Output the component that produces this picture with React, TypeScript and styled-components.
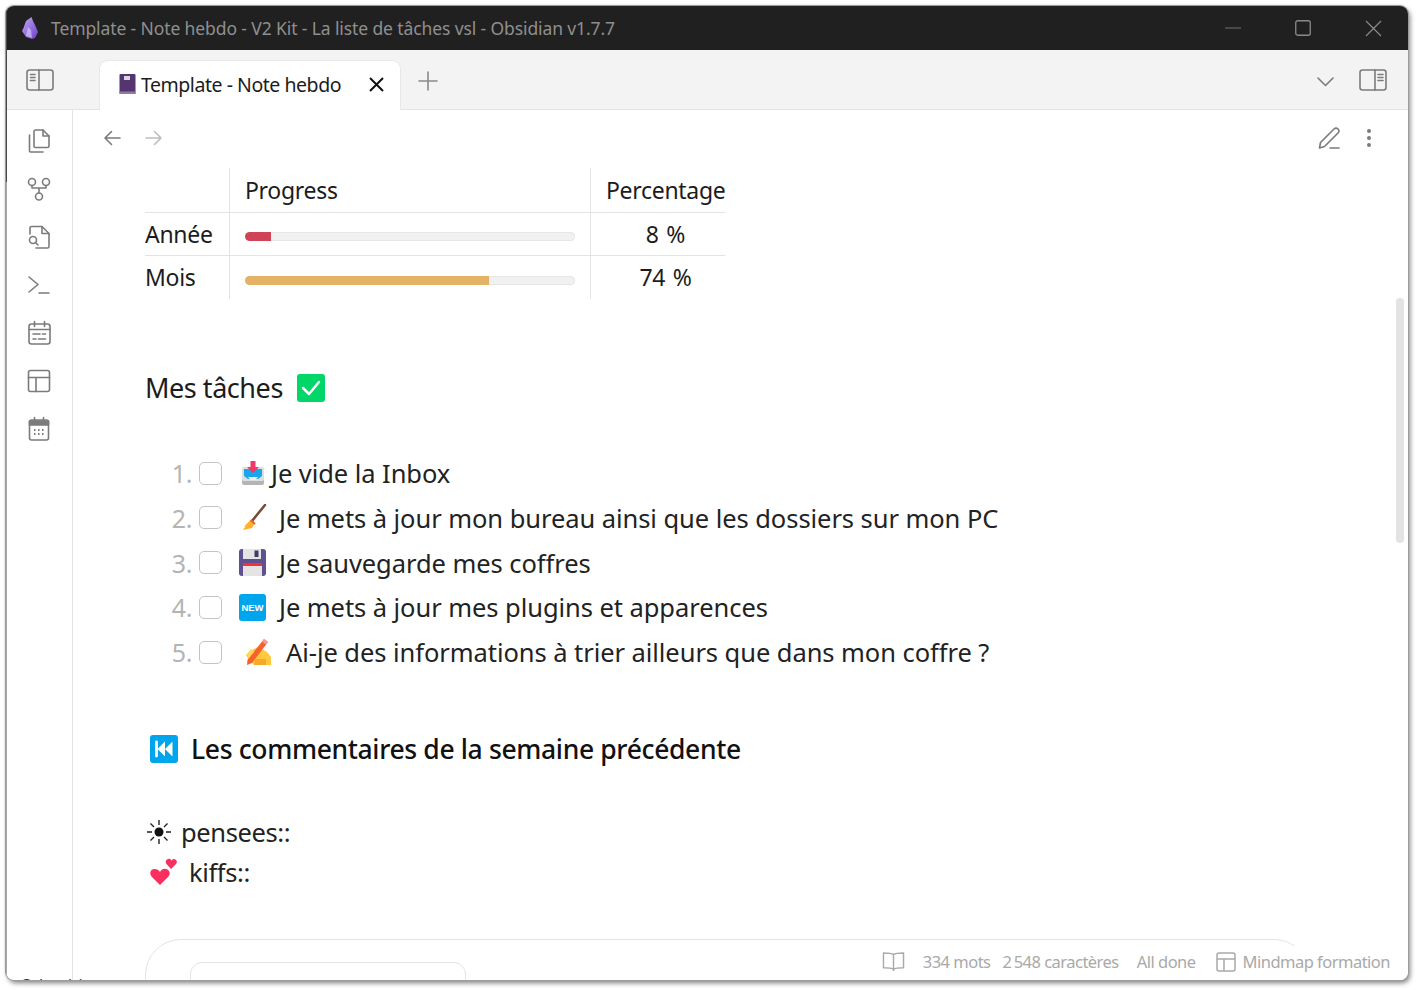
import React from 'react';
import styled, { createGlobalStyle } from 'styled-components';

const Global = createGlobalStyle`
  html, body { margin: 0; padding: 0; background: #fff; height: 100%; overflow: hidden; }
  body { font-family: "Noto Sans", "Open Sans", sans-serif; }
`;
const Page = styled.div`
  width: 1419px; height: 990px; padding: 6px 11px 10px 6px; box-sizing: border-box; background: #fff;
`;
const Win = styled.div`
  position: relative; width: 1402px; height: 974px; border-radius: 8px; overflow: hidden; background: #fff;
  display: flex; flex-direction: column;
  box-shadow: 0 0 0 1px #9c9c9c, 2px 3px 5px rgba(0,0,0,.5), -1px -1px 2px rgba(0,0,0,.15);
  &::before { content: ""; position: absolute; left: 0; top: 0; width: 1px; height: 176px; background: #474747; z-index: 3; }
  &::after { content: ""; position: absolute; left: 0; top: 176px; bottom: 0; width: 1px; background: #a6a6a6; z-index: 3; }
`;
const TitleBar = styled.div`
  height: 44px; flex: none; background: #202020; display: flex; align-items: center; padding: 0 0 0 14px;
`;
const TitleText = styled.div`
  margin-left: 11px; color: #8f8f8f; font-size: 17.5px; letter-spacing: -.11px; white-space: nowrap; flex: 1;
`;
const WinButton = styled.div`
  width: 70px; height: 44px; display: flex; align-items: center; justify-content: center; color: #8a8a8a;
`;
const TabBar = styled.div`
  height: 60px; flex: none; background: #f3f3f3; border-bottom: 1px solid #e3e3e3; box-sizing: border-box;
  display: flex; align-items: flex-start; position: relative; padding-right: 5px;
`;
const IconSlot = styled.div<{ $w: number; $pt?: number }>`
  width: ${p => p.$w}px; height: 60px; flex: none; display: flex; align-items: center; justify-content: center; color: #7b7b7b; padding-top: ${p => p.$pt ?? 0}px; box-sizing: border-box;
`;
const Tab = styled.div`
  margin-top: 10px; margin-left: 26px; width: 302px; height: 50px; box-sizing: border-box; background: #fff;
  border: 1px solid #e8e8e8; border-bottom: none; border-radius: 9px 9px 0 0; display: flex; align-items: center; padding: 0 16px 3px 18px;
  position: relative; z-index: 1;
`;
const TabLabel = styled.span`
  font-size: 19.5px; letter-spacing: -.46px; color: #1c1c1c; flex: 1; margin-left: 4px; white-space: nowrap;
`;
const Spacer = styled.div`flex: 1;`;
const Body = styled.div`flex: 1; display: flex; min-height: 0;`;
const Rail = styled.div`
  width: 67px; flex: none; border-right: 1px solid #e3e3e3; box-sizing: border-box; display: flex; flex-direction: column; align-items: center; padding-top: 7px; color: #7b7b7b; position: relative;
`;
const RailIcon = styled.div`
  width: 48px; height: 48px; display: flex; align-items: center; justify-content: center;
`;
const Main = styled.div`flex: 1; display: flex; flex-direction: column; min-width: 0; position: relative;`;
const NavBar = styled.div`
  height: 58px; flex: none; display: flex; align-items: center; padding: 0 19px 2px 18px; color: #7b7b7b; box-sizing: border-box;
`;
const NavBtn = styled.div<{ $muted?: boolean; $w?: number }>`
  width: ${p => p.$w ?? 42}px; height: 34px; display: flex; align-items: center; justify-content: center; color: ${p => p.$muted ? '#bdbdbd' : '#7b7b7b'};
`;
const Content = styled.div`
  flex: 1; padding-left: 72px; min-height: 0; overflow: hidden; color: #1c1c1c; font-size: 23px;
`;
const Table = styled.div`
  display: grid; grid-template-columns: 85px 361px 134px; width: 580px;
`;
const Cell = styled.div<{ $h: number; $center?: boolean; $top?: boolean; $right?: boolean; $pl?: number; $pb?: number }>`
  height: ${p => p.$h}px; box-sizing: border-box; display: flex; align-items: center;
  justify-content: ${p => p.$center ? 'center' : 'flex-start'};
  border-top: ${p => p.$top ? '1px solid #e3e3e3' : 'none'};
  border-right: ${p => p.$right ? '1px solid #e3e3e3' : 'none'};
  padding-left: ${p => p.$pl ?? 0}px; padding-bottom: ${p => p.$pb ?? 0}px; font-size: 23px; letter-spacing: -.3px; word-spacing: 2px; color: #1c1c1c; white-space: nowrap;
`;
const Track = styled.div<{ $mt: number }>`
  width: 330px; height: 9px; background: #f1f1f1; border-radius: 5px; box-shadow: inset 0 0 0 1px #e6e6e6; overflow: hidden; margin-top: ${p => p.$mt}px;
`;
const Fill = styled.div<{ $c: string }>`height: 100%; background: ${p => p.$c}; border-radius: 4px 0 0 4px;`;
const H2 = styled.div`
  margin-top: 69px; height: 38px; display: flex; align-items: center; font-size: 27px; letter-spacing: -.45px; color: #1c1c1c; gap: 14px; white-space: nowrap;
  svg { margin-top: 1px; }
`;
const List = styled.div`margin-top: 44.7px; display: flex; flex-direction: column;`;
const Row = styled.div`height: 44.75px; display: flex; align-items: center; white-space: nowrap;`;
const Num = styled.span`
  width: 54px; text-align: right; color: #b4b4b4; font-size: 25px; letter-spacing: -.4px; flex: none; padding-right: 7px; box-sizing: border-box;
`;
const Check = styled.span`
  width: 23px; height: 23px; flex: none; box-sizing: border-box; border: 1px solid #c4c4c4; border-radius: 5px; margin: 0 16px 0 0;
`;
const EmojiBox = styled.span<{ $w: number; $pl: number }>`
  width: ${p => p.$w}px; padding-left: ${p => p.$pl}px; box-sizing: border-box; flex: none; display: flex; align-items: center;
`;
const TaskText = styled.span`font-size: 25.5px; letter-spacing: -.06px; color: #222;`;
const H3 = styled.div`
  margin-top: 54.3px; margin-left: 5px; height: 40px; display: flex; align-items: center; gap: 13px; font-size: 26.5px; font-weight: 500; letter-spacing: -.36px; color: #111; white-space: nowrap;
`;
const Props = styled.div`margin-top: 43px;`;
const PropLine = styled.div`height: 40px; display: flex; align-items: center; font-size: 25.5px; letter-spacing: -.38px; color: #222;`;
const Sunny = styled.span`margin-left: 1px; display: flex;`;
const Heart = styled.span`margin-left: 5px; display: flex;`;
const PropLabel = styled.span<{ $ml: number }>`margin-left: ${p => p.$ml}px;`;
const Card = styled.div`
  margin-top: 47px; width: 1165px; height: 200px; border: 1px solid #e3e3e3; border-radius: 36px 36px 0 0; box-sizing: border-box; padding: 22px 0 0 44px; display: flex; gap: 39px;
`;
const InnerCard = styled.div`
  width: 276px; height: 100px; border: 1px solid #e3e3e3; border-radius: 12px 12px 0 0; box-sizing: border-box;
`;
const CardTitle = styled.div`
  margin-top: 13px; font-size: 22px; color: #1c1c1c; white-space: nowrap; letter-spacing: -.2px;
`;
const StatusBar = styled.div`
  position: absolute; right: 0; bottom: 0; height: 34px; display: flex; align-items: center; background: #fff; color: #a9a9a9; font-size: 16.5px; letter-spacing: -.52px; padding: 0 18px 3px 8px; box-sizing: border-box; white-space: nowrap;
`;
const StatusItem = styled.span<{ $ml: number }>`margin-left: ${p => p.$ml}px; display: flex; align-items: center;`;
const Scrollbar = styled.div`
  position: absolute; top: 188px; right: 4px; width: 8px; height: 245px; background: #e3e3e3; border-radius: 4px;
`;
const CutText = styled.div`
  position: absolute; left: 14px; bottom: -16px; font-size: 16px; color: #333; white-space: nowrap;
`;

const sv = { fill: 'none', stroke: 'currentColor', strokeWidth: 1.6, strokeLinecap: 'round' as const, strokeLinejoin: 'round' as const };

const Obsidian = () => (
  <svg width="20" height="24" viewBox="0 0 20 24">
    <defs><linearGradient id="ob" x1="0" y1="0" x2="1" y2="1"><stop offset="0" stopColor="#c5a9f7"/><stop offset="1" stopColor="#6a3fc9"/></linearGradient></defs>
    <path d="M11.5 1 L6 5 L3.5 12 L2 15 L6 21 L12 23 L15 22 L18 16 L15.5 10 L13 5 Z" fill="url(#ob)"/>
    <path d="M8 11 L6 20 L12 22 L11 14 Z" fill="#e7dcff" opacity=".55"/>
  </svg>
);
const PanelL = () => (
  <svg width="28" height="24" viewBox="0 0 28 24" {...sv}><rect x="1" y="2" width="26" height="20" rx="2.5"/><path d="M13 2v20M4.5 6.5h4.5M4.5 9.5h4.5M4.5 12.5h4.5"/></svg>
);
const PanelR = () => (
  <svg width="28" height="24" viewBox="0 0 28 24" {...sv}><rect x="1" y="2" width="26" height="20" rx="2.5"/><path d="M16 2v20M19 6.5h5M19 9.5h5M19 12.5h5"/></svg>
);
const Book = () => (
  <svg width="19" height="22" viewBox="0 0 19 22">
    <rect x="1.5" y="1" width="16" height="20" rx="1" fill="#55356f"/><rect x="1.5" y="18.5" width="16" height="2.5" fill="#8f7aa3"/><rect x="6" y="3" width="6" height="4" fill="#dcd3e6"/>
  </svg>
);
const IFiles = () => (
  <svg width="24" height="26" viewBox="0 0 24 26" {...sv}><path d="M7 3.500a1.500 1.500 0 0 1 1.500-1.500H16l6 6v10a1.500 1.500 0 0 1-1.500 1.500h-12A1.500 1.500 0 0 1 7 18Z"/><path d="M16 2v6h6"/><path d="M2.500 7v16a1 1 0 0 0 1 1H16"/></svg>
);
const IGraph = () => (
  <svg width="24" height="24" viewBox="0 0 24 24" {...sv}><circle cx="5" cy="5" r="3.500"/><circle cx="19" cy="5" r="3.500"/><circle cx="12" cy="19.500" r="3.500"/><path d="M5 8.500v2.500h14V8.500M12 11v5"/></svg>
);
const ISearchFile = () => (
  <svg width="24" height="26" viewBox="0 0 24 26" {...sv}><path d="M3 10V4a1.500 1.500 0 0 1 1.500-1.500H15l7 7v13a1.500 1.500 0 0 1-1.500 1.500H9"/><path d="M15 2.500V9.500h7"/><circle cx="6" cy="16" r="3.500"/><path d="M8.500 18.500 11 21"/></svg>
);
const ITerm = () => (
  <svg width="24" height="20" viewBox="0 0 24 20" {...sv}><path d="M2 2l9 7.500-9 7.500M12 18h10"/></svg>
);
const ICal1 = () => (
  <svg width="24" height="26" viewBox="0 0 24 26" {...sv}><rect x="2" y="4" width="21" height="20" rx="2.500"/><path d="M2 9.500h21M7.500 1.500v5M17.500 1.500v5M6 14h7M15.500 14h3M6 19h3M11.500 19h7"/></svg>
);
const ITable = () => (
  <svg width="24" height="24" viewBox="0 0 24 24" {...sv}><rect x="1.500" y="1.500" width="21" height="21" rx="2"/><path d="M1.500 8.500h21M9 8.500v14"/></svg>
);
const ICal2 = () => (
  <svg width="24" height="26" viewBox="0 0 24 26" {...sv}><rect x="2.500" y="4" width="19" height="20" rx="2"/><path d="M2.500 5h19v4h-19z" fill="currentColor"/><path d="M7.500 1.500v4M16.500 1.500v4"/><path d="M7 14h1.500M11 14h1.500M15 14h1.500M7 18h1.500M11 18h1.500M15 18h1.500" strokeWidth="1.800" strokeLinecap="butt"/></svg>
);
const Pencil = () => (
  <svg width="24" height="24" viewBox="0 0 24 24" {...sv}><path d="M2.500 22 3.500 16.500 17 3a2.700 2.700 0 0 1 4 4L7.500 20.500Z"/><path d="M13 22h9"/></svg>
);
const Dots = () => (
  <svg width="6" height="20" viewBox="0 0 6 20" fill="currentColor"><circle cx="3" cy="3" r="2"/><circle cx="3" cy="10" r="2"/><circle cx="3" cy="17" r="2"/></svg>
);
const Arrow = ({ r }: { r?: boolean }) => (
  <svg width="18" height="16" viewBox="0 0 18 16" {...sv} style={r ? { transform: 'scaleX(-1)' } : undefined}><path d="M17 8H2M8.500 1.500 2 8l6.500 6.500"/></svg>
);

const GreenCheck = () => (
  <svg width="28" height="28" viewBox="0 0 28 28"><rect width="28" height="28" rx="3" fill="#00d768"/><path d="M6 14l6 6 10-12" fill="none" stroke="#fff" strokeWidth="2.500" strokeLinecap="round" strokeLinejoin="round"/></svg>
);
const Inbox = () => (
  <svg width="24" height="26" viewBox="0 0 24 26">
    <rect x="1" y="17" width="22" height="8" rx="2" fill="#b4b4b4"/><path d="M1 9a2 2 0 0 1 2-2h18a2 2 0 0 1 2 2v10a2 2 0 0 1-2 2H3a2 2 0 0 1-2-2Z" fill="#dedede"/>
    <path d="M3 9h18v7l-4 3H7l-4-3Z" fill="#19a6ea"/><path d="M7 17h10l-2.500 3h-5Z" fill="#efefef"/>
    <path d="M9.500 1h5v6H18l-6 6-6-6h3.500Z" fill="#f0386b"/>
  </svg>
);
const Broom = () => (
  <svg width="28" height="28" viewBox="0 0 28 28">
    <path d="M25 1 12 17" stroke="#7a4a38" strokeWidth="2.500" strokeLinecap="round"/>
    <path d="M11 15.500 15 19 12 24l-9 2 2-3 1-1-2 .500Z" fill="#ffb02e"/><path d="M10.500 16 15 20" stroke="#e8632c" strokeWidth="2"/>
  </svg>
);
const Floppy = () => (
  <svg width="27" height="27" viewBox="0 0 27 27">
    <rect width="27" height="27" rx="3" fill="#5f518f"/><rect x="4" y="0" width="18" height="10" fill="#e4e4e4"/><rect x="15.500" y="1.500" width="4" height="6.500" fill="#433a66"/>
    <rect x="4" y="14" width="19" height="13" fill="#e4e4e4"/><rect x="4" y="14" width="19" height="3" fill="#f8312f"/>
  </svg>
);
const NewBadge = () => (
  <svg width="27" height="27" viewBox="0 0 27 27"><rect width="27" height="27" rx="3" fill="#00a6ed"/><text x="13.500" y="17" textAnchor="middle" fontFamily="Liberation Sans, sans-serif" fontSize="9.500" fontWeight="700" fill="#fff">NEW</text></svg>
);
const Writing = () => (
  <svg width="30" height="28" viewBox="0 0 30 28">
    <path d="M3 17 9 12l6-3 9 5 4 5v8H11l-5-5Z" fill="#ffc83d"/>
    <path d="M21 1l4 3L9 25l-5 2 .500-5Z" fill="#f8602c"/><path d="M21 1l4 3-2 2.500-4-3Z" fill="#f79aa0"/>
    <path d="M12 21h11v6H11Z" fill="#f7a92c"/><path d="M8 11l-5 6 3 3 5-6Z" fill="#ffd75c"/>
  </svg>
);
const Rewind = () => (
  <svg width="28" height="28" viewBox="0 0 28 28"><rect width="28" height="28" rx="3" fill="#00a6ed"/><path d="M6.500 7v14" stroke="#fff" strokeWidth="2.800" strokeLinecap="round"/><path d="M15 6.500v15L7.500 14ZM22.500 6.500v15L15 14Z" fill="#fff"/></svg>
);
const Sun = () => (
  <svg width="26" height="26" viewBox="0 0 26 26"><circle cx="13" cy="13" r="4.500" fill="#111"/><g stroke="#222" strokeWidth="1.400"><path d="M13 1v5M13 20v5M1 13h5M20 13h5M4.500 4.500l3.500 3.500M18 18l3.500 3.500M21.500 4.500 18 8M8 18l-3.500 3.500"/></g></svg>
);
const Hearts = () => (
  <svg width="28" height="28" viewBox="0 0 28 28" fill="#f92f60">
    <path d="M10 27 1.500 18.500C-.5 16 0 12.500 2.500 11.500 5 10.500 8 11 10 14c1.500-3 5-4 7.500-2.500s3 4.500 1 7Z"/>
    <path d="M21 11l-4.500-5C15 4 16 1.500 18 1s3 .500 3.500 1.500C22.500 1 24 .500 25.500 1.500s2 3 .500 4.500Z"/>
  </svg>
);

const tasks = [
  { n: '1.', w: 33, el: <Inbox />, t: 'Je vide la Inbox', pl: 3 },
  { n: '2.', w: 41, el: <Broom />, t: 'Je mets à jour mon bureau ainsi que les dossiers sur mon PC', pl: 2 },
  { n: '3.', w: 41, el: <Floppy />, t: 'Je sauvegarde mes coffres', pl: 1 },
  { n: '4.', w: 41, el: <NewBadge />, t: 'Je mets à jour mes plugins et apparences', pl: 1 },
  { n: '5.', w: 48, el: <Writing />, t: 'Ai-je des informations à trier ailleurs que dans mon coffre ?', pl: 5 },
];

export default function App() {
  return (
    <>
      <Global />
      <Page>
        <Win>
          <TitleBar>
            <Obsidian />
            <TitleText>Template - Note hebdo - V2 Kit - La liste de tâches vsl - Obsidian v1.7.7</TitleText>
            <WinButton><svg width="16" height="2" viewBox="0 0 16 2"><path d="M0 1h16" stroke="#707070" strokeWidth="1"/></svg></WinButton>
            <WinButton><svg width="16" height="16" viewBox="0 0 16 16"><rect x=".75" y=".75" width="14.500" height="14.500" rx="2" fill="none" stroke="#8a8a8a" strokeWidth="1.300"/></svg></WinButton>
            <WinButton><svg width="17" height="17" viewBox="0 0 17 17"><path d="M1 1l15 15M16 1 1 16" stroke="#8a8a8a" strokeWidth="1.200"/></svg></WinButton>
          </TitleBar>
          <TabBar>
            <IconSlot $w={67}><PanelL /></IconSlot>
            <Tab>
              <Book />
              <TabLabel>Template - Note hebdo</TabLabel>
              <svg width="15" height="15" viewBox="0 0 15 15"><path d="M1 1l13 13M14 1 1 14" stroke="#111" strokeWidth="2"/></svg>
            </Tab>
            <IconSlot $w={54} $pt={2}><svg width="20" height="20" viewBox="0 0 20 20"><path d="M10 1v18M1 10h18" stroke="#8a8a8a" strokeWidth="1.600" strokeLinecap="round"/></svg></IconSlot>
            <Spacer />
            <IconSlot $w={36} $pt={3}><svg width="17" height="10" viewBox="0 0 17 10"><path d="M1 1l7.500 7.500L16 1" fill="none" stroke="#7b7b7b" strokeWidth="1.600" strokeLinecap="round" strokeLinejoin="round"/></svg></IconSlot>
            <IconSlot $w={60}><PanelR /></IconSlot>
          </TabBar>
          <Body>
            <Rail>
              <RailIcon><IFiles /></RailIcon>
              <RailIcon><IGraph /></RailIcon>
              <RailIcon><ISearchFile /></RailIcon>
              <RailIcon><ITerm /></RailIcon>
              <RailIcon><ICal1 /></RailIcon>
              <RailIcon><ITable /></RailIcon>
              <RailIcon><ICal2 /></RailIcon>
              <CutText>Calendrier</CutText>
            </Rail>
            <Main>
              <NavBar>
                <NavBtn><Arrow /></NavBtn>
                <NavBtn $muted><Arrow r /></NavBtn>
                <Spacer />
                <NavBtn $w={40}><Pencil /></NavBtn>
                <NavBtn $w={40}><Dots /></NavBtn>
              </NavBar>
              <Content>
                <Table>
                  <Cell $h={44} $right />
                  <Cell $h={44} $right $pl={15}>Progress</Cell>
                  <Cell $h={44} $pl={15}>Percentage</Cell>
                  <Cell $h={43} $top $right>Année</Cell>
                  <Cell $h={43} $top $right $pl={15}><Track $mt={5}><Fill $c="#d04255" style={{ width: '8%' }} /></Track></Cell>
                  <Cell $h={43} $top $center $pl={15}>8 %</Cell>
                  <Cell $h={44} $top $right $pb={2}>Mois</Cell>
                  <Cell $h={44} $top $right $pl={15}><Track $mt={6}><Fill $c="#e3b265" style={{ width: '74%' }} /></Track></Cell>
                  <Cell $h={44} $top $center $pl={15} $pb={2}>74 %</Cell>
                </Table>
                <H2>Mes tâches <GreenCheck /></H2>
                <List>
                  {tasks.map(t => (
                    <Row key={t.n}>
                      <Num>{t.n}</Num>
                      <Check />
                      <EmojiBox $w={t.w} $pl={t.pl}>{t.el}</EmojiBox>
                      <TaskText>{t.t}</TaskText>
                    </Row>
                  ))}
                </List>
                <H3><Rewind />Les commentaires de la semaine précédente</H3>
                <Props>
                  <PropLine><Sunny><Sun /></Sunny><PropLabel $ml={9}>pensees::</PropLabel></PropLine>
                  <PropLine><Heart><Hearts /></Heart><PropLabel $ml={11}>kiffs::</PropLabel></PropLine>
                </Props>
                <Card>
                  <InnerCard />
                  <CardTitle>Commentaires de la semaine</CardTitle>
                </Card>
              </Content>
              <Scrollbar />
              <StatusBar>
                <svg width="23" height="21" viewBox="0 0 24 22" fill="none" stroke="#a9a9a9" strokeWidth="1.500" strokeLinejoin="round"><path d="M12 3.500C10 2 6 2 1.500 2v15.500c4.500 0 8.500 0 10.500 1.500 2-1.500 6-1.500 10.500-1.500V2C18 2 14 2 12 3.500ZM12 3.500V21"/></svg>
                <StatusItem $ml={18}>334 mots</StatusItem>
                <StatusItem $ml={12}>2&#8239;548 caractères</StatusItem>
                <StatusItem $ml={18}>All done</StatusItem>
                <StatusItem $ml={20}><svg width="20" height="20" viewBox="0 0 20 20" fill="none" stroke="#a9a9a9" strokeWidth="1.500"><rect x="1" y="1" width="18" height="18" rx="2"/><path d="M1 7h18M8 7v12"/></svg></StatusItem>
                <StatusItem $ml={7}>Mindmap formation</StatusItem>
              </StatusBar>
            </Main>
          </Body>
        </Win>
      </Page>
    </>
  );
}
